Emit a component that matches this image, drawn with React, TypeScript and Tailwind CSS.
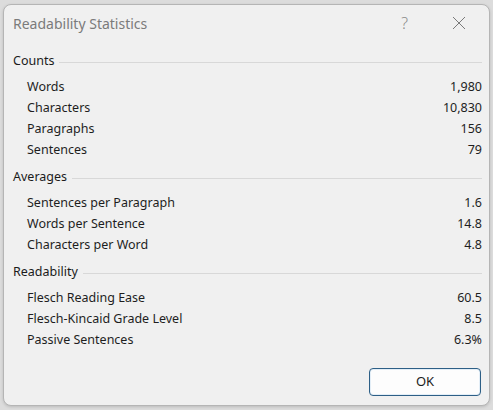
const sections = [
  {
    title: "Counts",
    rows: [
      ["Words", "1,980"],
      ["Characters", "10,830"],
      ["Paragraphs", "156"],
      ["Sentences", "79"],
    ],
  },
  {
    title: "Averages",
    rows: [
      ["Sentences per Paragraph", "1.6"],
      ["Words per Sentence", "14.8"],
      ["Characters per Word", "4.8"],
    ],
  },
  {
    title: "Readability",
    rows: [
      ["Flesch Reading Ease", "60.5"],
      ["Flesch-Kincaid Grade Level", "8.5"],
      ["Passive Sentences", "6.3%"],
    ],
  },
];

export default function App() {
  return (
    <div
      className="w-[493px] h-[410px] bg-[#dcdcdc] pt-[4px] pl-[3px]"
      style={{ fontFamily: '"Noto Sans", "Open Sans", sans-serif' }}
    >
      <div className="w-[487px] h-[402px] rounded-[8px] border border-[#b5b5b5] bg-[#f0f0f0] flex flex-col shadow-[0_1px_3px_rgba(0,0,0,0.15)]">
        <div className="h-[36px] flex items-center pl-[9px] pr-[20px]">
          <span className="text-[14px] text-[#7b7b7b] flex-1">Readability Statistics</span>
          <span className="text-[16px] text-[#8a8a8a] mr-[44px] font-light">?</span>
          <svg width="14" height="14" viewBox="0 0 14 14" className="mr-[3px]">
            <path d="M1 1 L13 13 M13 1 L1 13" stroke="#7a7a7a" strokeWidth="1" fill="none" />
          </svg>
        </div>

        <div className="flex flex-col pl-[9px] pr-[7px] mt-[10px]">
          {sections.map((s, i) => (
            <div key={s.title} className={i === 0 ? "" : "mt-[6px]"}>
              <div className="h-[21px] flex items-center gap-[5px] mb-[5px]">
                <span className="text-[12.5px] text-[#1b1b1b]">{s.title}</span>
                <div className="flex-1 h-px bg-[#d8d8d8] mt-[1px]" />
              </div>
              {s.rows.map(([label, value]) => (
                <div key={label} className="h-[21px] flex items-center justify-between pl-[14px] text-[12.5px] text-[#1e1e1e]">
                  <span>{label}</span>
                  <span>{value}</span>
                </div>
              ))}
            </div>
          ))}
        </div>

        <div className="flex justify-end mt-auto pb-[9px] pr-[8px]">
          <button className="w-[112px] h-[28px] rounded-[4px] border border-[#2d5f86] bg-[#fdfdfd] text-[13px] text-[#1b1b1b] shadow-[inset_0_0_0_1px_#e3eef7]">
            OK
          </button>
        </div>
      </div>
    </div>
  );
}
